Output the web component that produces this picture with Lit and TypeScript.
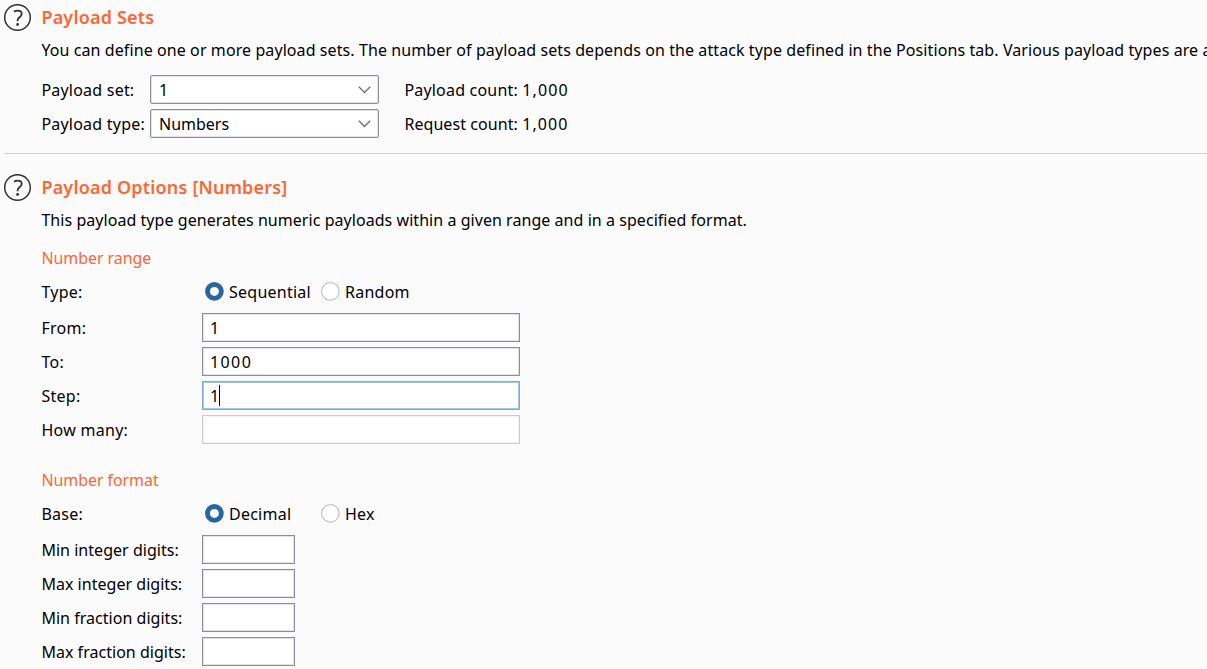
import { LitElement, html, css } from "lit";
import { customElement, property } from "lit/decorators.js";

@customElement("help-icon")
class HelpIcon extends LitElement {
  static styles = css`
    :host { display: block; width: 28px; height: 28px; }
    svg { display: block; }
  `;
  render() {
    return html`<svg width="28" height="28" viewBox="0 0 28 28" fill="none" stroke="#333">
      <circle cx="13.5" cy="13.5" r="12.8" stroke-width="1.5" />
      <path d="M10 7.6C11.2 6.9 12.5 6.6 13.7 6.6C16.2 6.6 17.7 7.8 17.7 9.8C17.7 11.5 16.8 12.3 15.5 13.3C14.2 14.3 13.6 15 13.6 16.6V17.3" stroke-width="1.8" />
      <circle cx="13.6" cy="20.5" r="1.4" fill="#333" stroke="none" />
    </svg>`;
  }
}

@customElement("radio-option")
class RadioOption extends LitElement {
  @property() label = "";
  @property({ type: Boolean }) checked = false;
  static styles = css`
    :host { display: flex; align-items: center; gap: 5px; height: 20px; }
    svg { display: block; flex: none; }
    .dot { margin-bottom: 3px; }
    .label { white-space: nowrap; letter-spacing: 0.25px; }
  `;
  render() {
    return html`<svg class="dot" width="19" height="19" viewBox="0 0 19 19">
        ${this.checked
          ? html`<svg><circle cx="9.4" cy="9.4" r="9.3" fill="#2766a0" /><circle cx="9.4" cy="9.4" r="4.5" fill="#fff" /></svg>`
          : html`<svg><circle cx="9.4" cy="9.4" r="8.8" fill="#fff" stroke="#b3b3b3" /></svg>`}
      </svg><span class="label">${this.label}</span>`;
  }
}

@customElement("select-box")
class SelectBox extends LitElement {
  @property() value = "";
  static styles = css`
    :host { display: flex; align-items: center; justify-content: space-between; box-sizing: border-box;
      width: 229px; height: 29px; padding: 0 7px 0 8px; background: #fff;
      border: 1px solid #8d8da0; border-radius: 2px; box-shadow: inset 0 0 0 1px #e2e2ea; }
    svg { display: block; }
    .value { padding-top: 2px; }
  `;
  render() {
    return html`<span class="value">${this.value}</span>
      <svg width="13" height="9" viewBox="0 0 13 9" fill="none" stroke="#6e6e6e" stroke-width="1.3"><path d="M.8 1.7L6.5 7.5L12.2 1.7" /></svg>`;
  }
}

const description =
  "You can define one or more payload sets. The number of payload sets depends on the attack type defined in the Positions tab. Various payload types are available for each payload set, and each payload type can be customized in different ways.";

@customElement("app-root")
class AppRoot extends LitElement {
  static styles = css`
    :host { display: block; box-sizing: border-box; height: 669px; overflow: hidden; padding: 4px 0 0 4px;
      background: #fbfbfb; color: #000; font: 16px/28px "Noto Sans", sans-serif; white-space: nowrap; }
    .section { display: grid; grid-template-columns: 28px 1fr; column-gap: 9px; }
    .body { min-width: 0; padding-left: 0.4px; }
    .title { font-size: 18px; line-height: 26px; font-weight: 600; color: #ff6633; height: 28px; letter-spacing: 0.18px; }
    .desc { margin-top: 4px; height: 28px; overflow: hidden; letter-spacing: 0.09px; }
    .desc.plain { letter-spacing: 0.05px; }
    .sets { display: grid; grid-template-columns: 108.6px 229px auto; row-gap: 5px; margin-top: 11px; line-height: 31px; grid-auto-rows: 29px; }
    .label { letter-spacing: 0.22px; }
    .count { padding-left: 25.4px; letter-spacing: 0.2px; }
    .count.request { letter-spacing: 0.07px; }
    .number { letter-spacing: 1.1px; }
    .rule { height: 1px; background: #cfcfcf; margin: 15px 0 20px; }
    .sub { color: #ff6633; height: 28px; margin-top: 10px; letter-spacing: -0.07px; }
    .row { display: grid; grid-template-columns: 160.6px auto; height: 29px; line-height: 31px; margin-bottom: 5px; }
    .row .label { letter-spacing: 0.28px; }
    .row .label.tight { letter-spacing: 0.03px; }
    .radios { display: grid; grid-template-columns: 116px auto; padding-left: 3px; align-items: center; }
    .choices { margin: 6px 0 7px; height: 28px; line-height: 29px; }
    .field { box-sizing: border-box; width: 318px; height: 29px; line-height: 27px; padding-left: 7px; background: #fff;
      border: 1px solid #8d8da0; box-shadow: inset 0 0 0 1px #e2e2ea; display: flex; align-items: center; }
    .value { padding-top: 2px; letter-spacing: 1.4px; }
    .focused .value { letter-spacing: 0; }
    .focused { border-color: #80aadd; box-shadow: inset 0 0 0 1px #a0c5ee; }
    .disabled { border-color: #cccccc; box-shadow: inset 0 0 0 1px #f1f1f1; }
    .short { width: 93px; }
    .caret { width: 1px; height: 21px; background: #000; }
    .format { margin-top: 22px; }
  `;
  private field(label: string, value: string, kind = "") {
    return html`<div class="row"><span class="label ${kind === "short" ? "tight" : ""}">${label}</span><div class="field ${kind}"><span class="value">${value}</span>${kind === "focused" ? html`<i class="caret"></i>` : ""}</div></div>`;
  }
  private choices(label: string, first: string, second: string) {
    return html`<div class="row choices"><span class="label">${label}</span><div class="radios">
      <radio-option checked label=${first}></radio-option><radio-option label=${second}></radio-option></div></div>`;
  }
  render() {
    return html`
      <div class="section">
        <help-icon></help-icon>
        <div class="body">
          <div class="title"><span>Payload Sets</span></div>
          <div class="desc">${description}</div>
          <div class="sets">
            <span class="label">Payload set:</span><select-box value="1"></select-box><span class="count">Payload count: <span class="number">1,000</span></span>
            <span class="label">Payload type:</span><select-box value="Numbers"></select-box><span class="count request">Request count: <span class="number">1,000</span></span>
          </div>
        </div>
      </div>
      <div class="rule"></div>
      <div class="section">
        <help-icon></help-icon>
        <div class="body">
          <div class="title"><span>Payload Options [Numbers]</span></div>
          <div class="desc plain">This payload type generates numeric payloads within a given range and in a specified format.</div>
          <div class="sub">Number range</div>
          ${this.choices("Type:", "Sequential", "Random")}
          ${this.field("From:", "1")} ${this.field("To:", "1000")} ${this.field("Step:", "1", "focused")} ${this.field("How many:", "", "disabled")}
          <div class="sub format">Number format</div>
          ${this.choices("Base:", "Decimal", "Hex")}
          ${["Min integer digits:", "Max integer digits:", "Min fraction digits:", "Max fraction digits:"].map((l) => this.field(l, "", "short"))}
        </div>
      </div>`;
  }
}
